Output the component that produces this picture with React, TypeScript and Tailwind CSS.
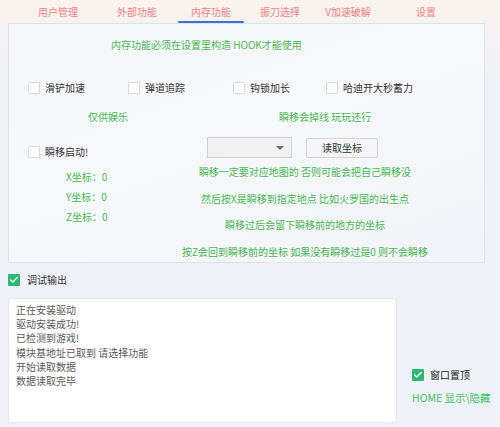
import { Check } from 'lucide-react';

const tabs = [
  { label: '用户管理', w: 'w-[76px]' },
  { label: '外部功能', w: 'w-[82px]' },
  { label: '内存功能', w: 'w-[66px]', active: true },
  { label: '振刀选择', w: 'w-[72px]' },
  { label: 'V加速破解', w: 'w-[64px]' },
  { label: '设置', w: 'w-[92px]' },
];

const options = [
  { label: '滑铲加速', w: 'w-[100px]' },
  { label: '弹道追踪', w: 'w-[105px]' },
  { label: '钩锁加长', w: 'w-[93px]' },
  { label: '哈迪开大秒蓄力', w: 'w-[100px]' },
];

const tips = [
  '瞬移一定要对应地图的 否则可能会把自己瞬移没',
  '然后按X是瞬移到指定地点 比如火罗国的出生点',
  '瞬移过后会留下瞬移前的地方的坐标',
  '按Z会回到瞬移前的坐标 如果没有瞬移过是0 则不会瞬移',
];

const logLines = ['正在安装驱动', '驱动安装成功!', '已检测到游戏!', '模块基地址已取到 请选择功能', '开始读取数据', '数据读取完毕'];

function Box({ checked = false }: { checked?: boolean }) {
  if (checked) {
    return (
      <span className="flex h-[12px] w-[12px] shrink-0 items-center justify-center rounded-[1px] bg-[#2fb872]">
        <Check className="h-[10px] w-[10px] text-white" strokeWidth={3.5} />
      </span>
    );
  }
  return <span className="h-[12px] w-[12px] shrink-0 rounded-[1px] border border-[#d6d9df] bg-white" />;
}

export default function App() {
  return (
    <div
      className="relative h-[427px] w-[500px] overflow-hidden bg-[linear-gradient(180deg,#fbf2ec_0px,#f3f2f5_40px,#eef1f7_120px,#eef1f7_100%)] text-[10px] leading-[14px] text-[#333]"
      style={{ fontFamily: '"Noto Sans CJK SC", "Noto Sans", sans-serif' }}
    >
      {/* tab bar */}
      <div className="flex h-[23px] pl-[20px]">
        {tabs.map((t) => (
          <div key={t.label} className={`${t.w} relative flex items-center justify-center text-[#ef8383]`}>
            {t.label}
            {t.active && <span className="absolute bottom-0 left-0 right-0 h-[2px] rounded-full bg-[#3b6fe0]" />}
          </div>
        ))}
      </div>

      {/* memory panel */}
      <div className="ml-[8px] h-[240px] w-[477px] border border-[#dfe2e8] bg-[linear-gradient(160deg,#f4f6fa_0%,#f6f8fb_45%,#f1f3f8_100%)]">
        <div className="pl-[102px] pt-[14px] text-[#48b850]">内存功能必须在设置里构造 HOOK才能使用</div>

        <div className="mt-[29px] flex pl-[19px]">
          {options.map((o) => (
            <label key={o.label} className={`${o.w} flex items-center gap-[5px]`}>
              <Box />
              <span>{o.label}</span>
            </label>
          ))}
        </div>

        <div className="mt-[15px] flex text-[#48b850]">
          <span className="ml-[79px] w-[191px]">仅供娱乐</span>
          <span>瞬移会掉线 玩玩还行</span>
        </div>

        <div className="mt-[13px] flex">
          <div className="w-[151px]">
            <label className="mt-[8px] flex items-center gap-[5px] pl-[19px]">
              <Box />
              <span>瞬移启动!</span>
            </label>
            <div className="mt-[11px] flex flex-col gap-[6px] pl-[57px] text-[#48b850]">
              <span>X坐标：0</span>
              <span>Y坐标：0</span>
              <span>Z坐标：0</span>
            </div>
          </div>

          <div className="w-[290px]">
            <div className="flex items-center pl-[47px]">
              <div className="relative h-[21px] w-[85px] border border-[#cfd1d4] bg-[#f1f1f1]">
                <span className="absolute right-[7px] top-[8px] h-0 w-0 border-x-[4px] border-t-[4px] border-x-transparent border-t-[#6b6b6b]" />
              </div>
              <button className="ml-[14px] h-[20px] w-[72px] rounded-[2px] border border-[#d3d5d8] bg-[#f5f5f5] text-[10px] text-[#333]">
                读取坐标
              </button>
            </div>
            <div className="mt-[7px] flex flex-col gap-[12.5px] text-center text-[#48b850]">
              {tips.map((t) => (
                <span key={t} className="whitespace-nowrap">
                  {t}
                </span>
              ))}
            </div>
          </div>
        </div>
      </div>

      {/* debug output */}
      <label className="ml-[8px] mt-[10px] flex items-center gap-[7px]">
        <Box checked />
        <span>调试输出</span>
      </label>

      <div className="mt-[11px] flex">
        <div className="ml-[8px] h-[125px] w-[389px] rounded-[3px] border border-[#e3e6eb] bg-white px-[7px] pt-[4px] text-[10px] leading-[14.2px] text-[#5a5a5a]">
          {logLines.map((l) => (
            <div key={l}>{l}</div>
          ))}
        </div>

        <div className="ml-[15px] flex flex-col justify-end pb-[18px]">
          <label className="flex items-center gap-[6px]">
            <Box checked />
            <span className="text-[#222]">窗口置顶</span>
          </label>
          <div className="mt-[9px] whitespace-nowrap text-[10.5px] text-[#3cc35f]">HOME 显示\隐藏</div>
        </div>
      </div>
    </div>
  );
}
